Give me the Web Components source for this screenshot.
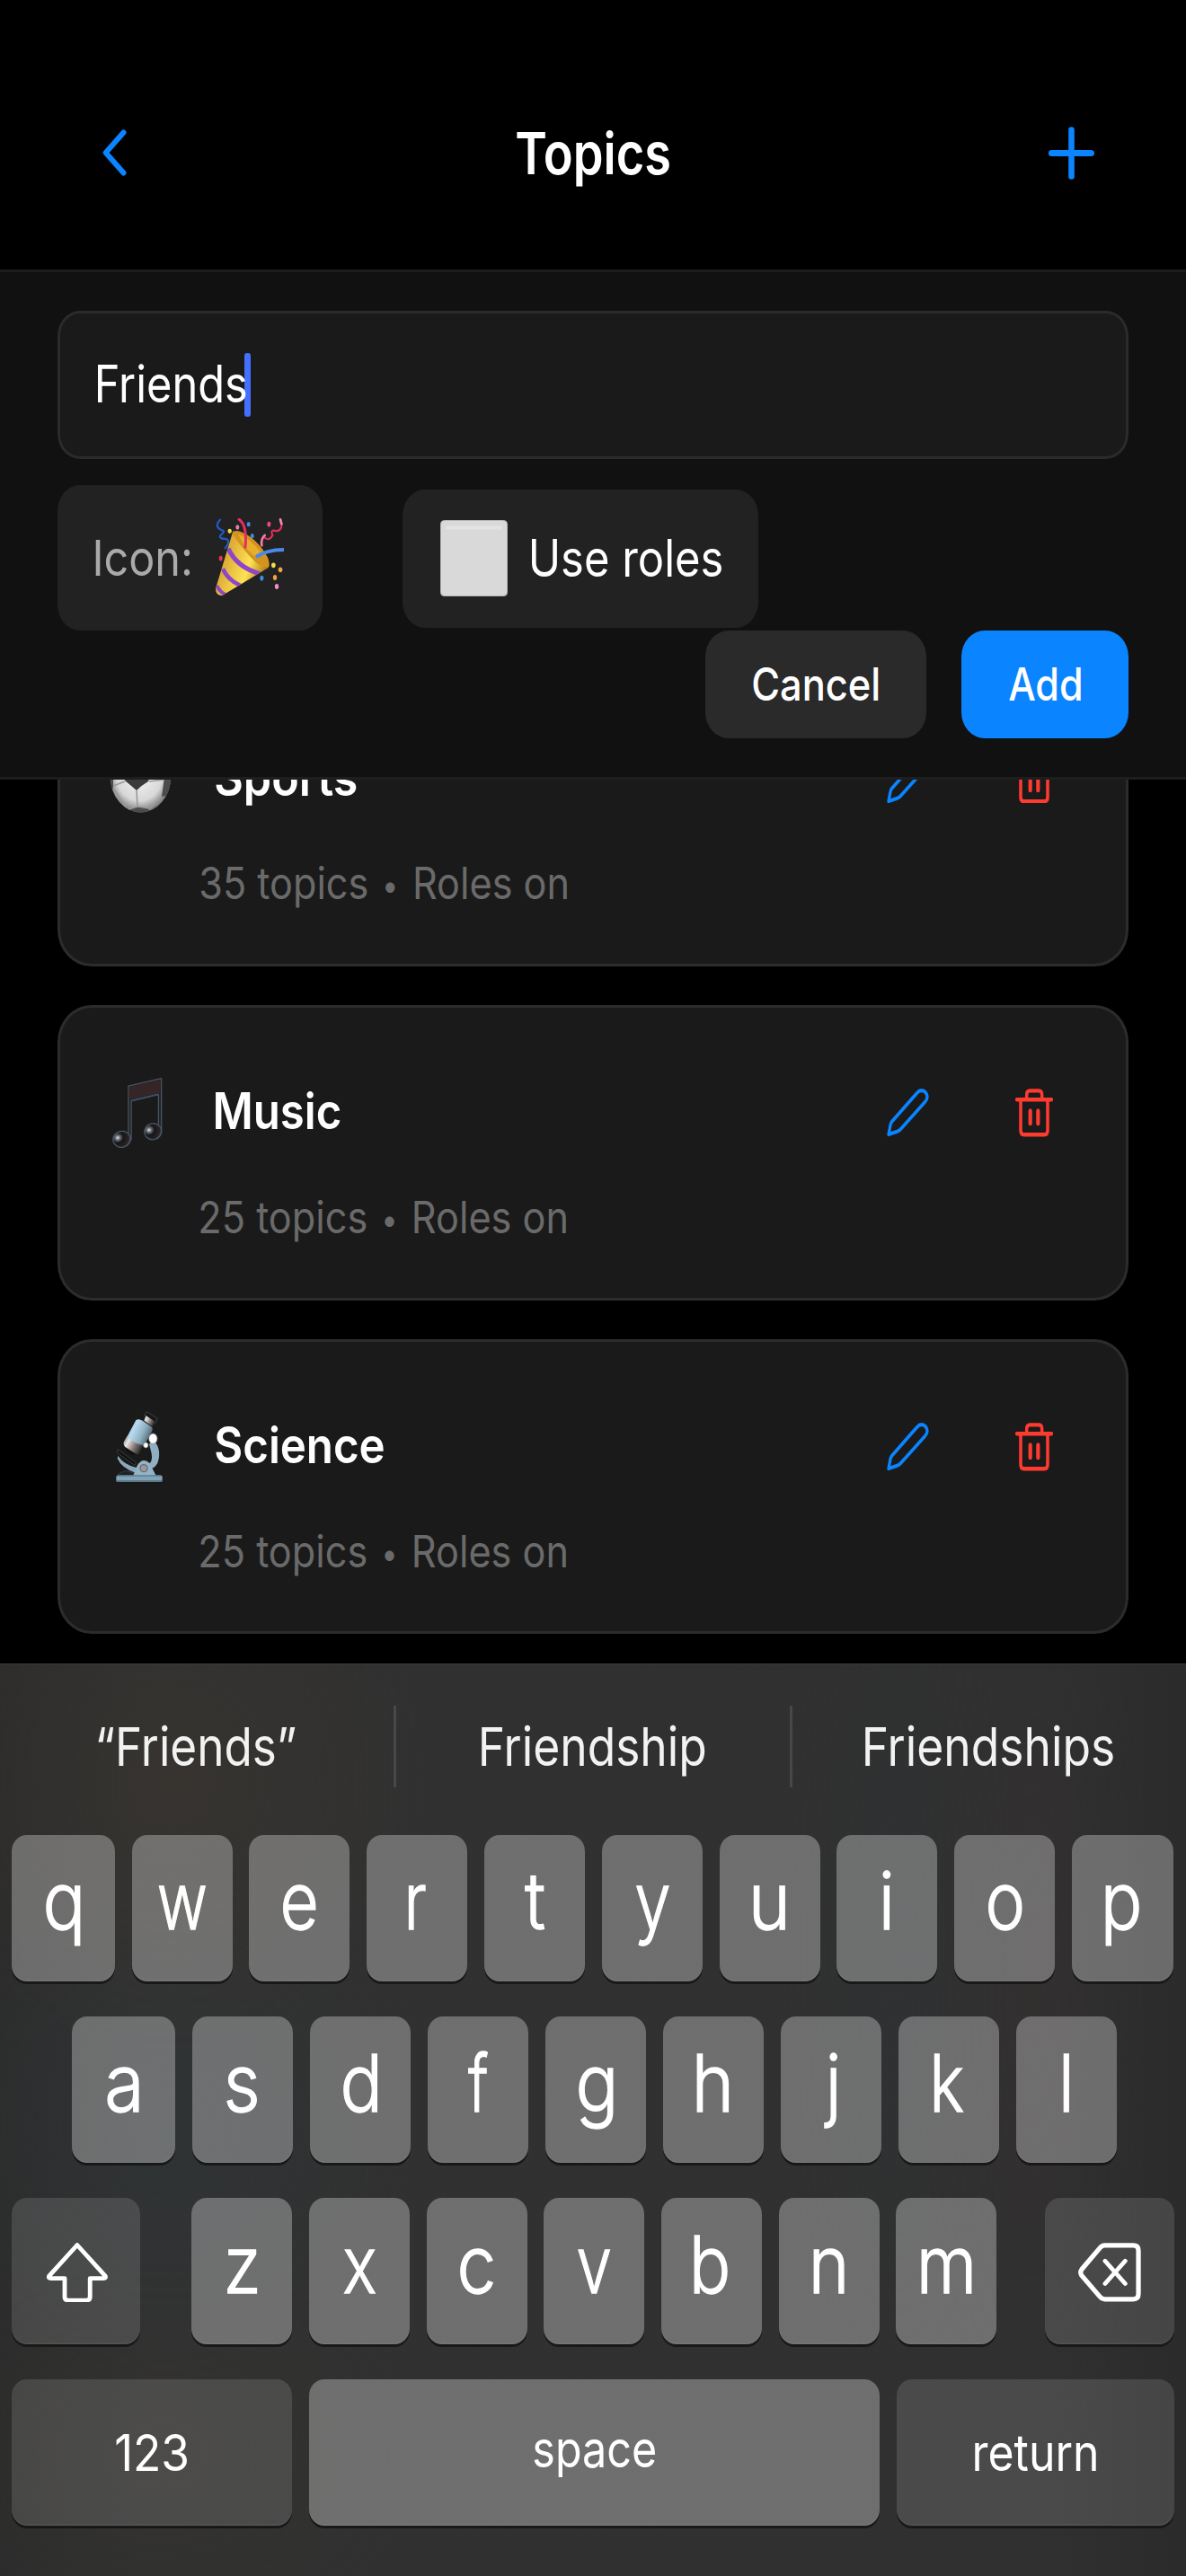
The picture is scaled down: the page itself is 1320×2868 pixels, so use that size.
<!DOCTYPE html>
<html lang="en">
<head>
<meta charset="utf-8">
<title>Topics</title>
<style>
html,body{margin:0;background:#000}
body{width:1320px;height:2868px;overflow:hidden;font-family:Inter,"Liberation Sans",sans-serif;color:#fff}
</style>
</head>
<body>
<topics-app></topics-app>
<script>
const define = (name, html, setup) => customElements.define(name, class extends HTMLElement {
  connectedCallback() {
    if (this.shadowRoot) return;
    const root = this.attachShadow({mode: 'open'});
    const t = document.createElement('template');
    t.innerHTML = typeof html === 'function' ? html(this) : html;
    root.append(t.content.cloneNode(true));
    if (setup) setup(this, root);
  }
});

/* Condensed label: cap = capital height, w = drawn width, wt = weight */
const ctx = document.createElement('canvas').getContext('2d');
define('ui-text', el => `<style>
:host{display:block;flex:none;white-space:nowrap}
span{display:inline-block;line-height:.7273em;transform-origin:0 0;vertical-align:top}
b{display:inline-block;font-weight:inherit;transform:translateY(.04em) scale(.76)}
</style><span></span>`, (el, root) => {
  const span = root.querySelector('span');
  const text = el.getAttribute('text'), cap = +el.getAttribute('cap'), w = +el.getAttribute('w');
  const wt = el.getAttribute('wt') || 400, fs = cap / .7273;
  span.innerHTML = text.replace('•', '<b>•</b>');
  span.style.fontSize = fs + 'px';
  span.style.fontWeight = wt;
  ctx.font = `${wt} ${fs}px Inter, "Liberation Sans", sans-serif`;
  const m = ctx.measureText(text);
  const k = w / (m.actualBoundingBoxLeft + m.actualBoundingBoxRight);
  span.style.transform = `scaleX(${k}) translateX(${m.actualBoundingBoxLeft}px)`;
  el.style.width = w + 'px';
  el.style.height = cap + 'px';
});

const icons = {
back: [27,52,'0 0 27 52',`<path d="M23.5 3.5 3.7 26 23.5 48.5" fill="none" stroke="#0a84ff" stroke-width="6" stroke-linecap="round" stroke-linejoin="round"/>`],
plus: [51,59,'0 0 51 59',`<path d="M25.5 3.5V55.5" stroke="#0a84ff" stroke-width="6.6" stroke-linecap="round"/><path d="M3.5 29.5H47.5" stroke="#0a84ff" stroke-width="7.2" stroke-linecap="round"/>`],
pencil: [46.6,53.5,'262 885 140 131',`<path d="M268 1010 274 984Q275 979 279 975L363 897Q372 888 384 891 397 896 397 909 396 916 390 921L310 994Q304 1000 297 1002Z" fill="none" stroke="#0a84ff" stroke-width="10" stroke-linejoin="round"/>`],
trash: [42,53.5,'690 885 126 131',`<g fill="none" stroke="#ff3b30" stroke-linecap="round"><path stroke-width="10.5" d="M695 915H811M728 914V902Q728 891 739 891H769Q779 891 779 902V914M708 916V999Q708 1010.500 719 1010.500H787Q798 1010.500 798 999V916"/><path stroke-width="12.500" d="M740 946V980M766 946V980"/></g>`],
shift: [67.8,66.5,'124 670 161 161',`<path d="M204.500 676 279 760Q281 766 274 766H238.500V816Q238.500 825 229 825H181Q171.500 825 171.500 816V766H135Q128 766 130 760Z" fill="none" stroke="#fff" stroke-width="11.500" stroke-linejoin="round"/>`],
del: [70,65.7,'1284 672 166 159',`<g fill="none" stroke="#fff" stroke-linecap="round" stroke-linejoin="round"><path stroke-width="12.500" d="M1354 679H1429Q1443 679 1443 693V810Q1443 824 1429 824H1354Q1347 824 1341 817L1293 760Q1288 752 1293 744L1341 686Q1347 679 1354 679Z"/><path stroke-width="11.500" d="M1355 721 1408 782M1408 721 1355 782"/></g>`],
party: [76.7,87.3,'27 27 230 262',`<defs><linearGradient id="g" x1="0" y1="0" x2="1" y2=".45"><stop offset="0" stop-color="#b98a22"/><stop offset=".35" stop-color="#e0b038"/><stop offset=".72" stop-color="#ffe254"/><stop offset="1" stop-color="#b9831c"/></linearGradient><clipPath id="c"><path d="M88 70 30 262Q30 286 52 285L206 192Q212 180 196 160 150 100 88 70Z"/></clipPath></defs>
<path d="M88 70 30 262Q30 286 52 285L206 192Q212 180 196 160 150 100 88 70Z" fill="url(#g)"/>
<g clip-path="url(#c)" fill="none" stroke="#8f46c8"><path d="M72 128Q100 190 176 212" stroke-width="15"/><path d="M54 196Q70 232 112 252" stroke-width="14"/><path d="M34 252Q44 274 66 284" stroke-width="12"/></g>
<path d="M86 78Q90 64 112 71 168 92 204 158 213 182 206 190 182 196 148 158 104 110 86 78Z" fill="#d3931f"/><path d="M106 80Q150 96 186 148 168 160 154 150 122 120 106 80Z" fill="#e9ad2c"/>
<g fill="none" stroke-linecap="round"><path d="M45 32Q24 54 48 66 66 68 46 84 40 96 64 96 82 102 62 127" stroke="#245ac4" stroke-width="6.500"/><path d="M108 31Q136 50 129 124" stroke="#e62e5c" stroke-width="9"/><path d="M246 31Q258 64 234 70 210 62 220 84 208 106 192 90" stroke="#d9305c" stroke-width="6.500"/><path d="M246 31 250 46" stroke="#f08bb4" stroke-width="8"/><path d="M184 118Q180 96 194 84" stroke="#ee7fa9" stroke-width="8"/><path d="M165 156Q200 132 262 132" stroke="#4a8ae6" stroke-width="12" stroke-linecap="butt"/></g>
<g><ellipse cx="77" cy="70" rx="6.500" ry="8" fill="#f1dc4a"/><ellipse cx="103" cy="57" rx="6" ry="8" fill="#e87fb0"/><ellipse cx="140" cy="47" rx="6" ry="8" fill="#3b8de6"/><ellipse cx="152" cy="86" rx="6" ry="8" fill="#3b8de6"/><ellipse cx="208" cy="47" rx="6" ry="8.500" fill="#e94b7b"/><ellipse cx="47" cy="161" rx="6" ry="8.500" fill="#e0345c"/><ellipse cx="223" cy="184" rx="7" ry="8.500" fill="#f1dc4a"/><ellipse cx="246" cy="199" rx="7" ry="8.500" fill="#f0a340"/><ellipse cx="228" cy="225" rx="6.500" ry="9" fill="#f0a340"/><ellipse cx="184" cy="227" rx="6" ry="8.500" fill="#3b8de6"/><ellipse cx="234" cy="255" rx="6.500" ry="9" fill="#f08fc0"/></g>`],
music: [76,80,'196 853 186 196',`<defs><radialGradient id="h" cx=".3" cy=".35" r=".75"><stop offset="0" stop-color="#e8e8e8"/><stop offset=".18" stop-color="#6c7178"/><stop offset=".42" stop-color="#15161a"/><stop offset=".85" stop-color="#2b2325"/><stop offset="1" stop-color="#53606c"/></radialGradient></defs>
<path d="M252 878 342 857V1004H334V901L260 919V1024H252Z" fill="#22262b" stroke="#49545f" stroke-width="3" stroke-linejoin="round"/><path d="M254 881 340 861V895L254 915Z" fill="#352526"/><path d="M260 918 334 900" stroke="#3a5366" stroke-width="3.500"/>
<ellipse cx="234" cy="1023" rx="24" ry="22" fill="url(#h)" stroke="#4a5966" stroke-width="3" transform="rotate(-14 234 1023)"/><ellipse cx="319" cy="1002" rx="23.500" ry="22" fill="url(#h)" stroke="#4a5966" stroke-width="3" transform="rotate(-14 319 1002)"/>`],
science: [76,80,'30 32 228 240',`<defs><linearGradient id="b" x1="0" y1="0" x2="1" y2=".5"><stop offset="0" stop-color="#7899ab"/><stop offset=".35" stop-color="#b8dcef"/><stop offset=".7" stop-color="#8fb0c2"/><stop offset="1" stop-color="#4c6370"/></linearGradient><linearGradient id="m" x1="0" y1="0" x2="1" y2=".5"><stop offset="0" stop-color="#6d7378"/><stop offset=".3" stop-color="#e6e8ea"/><stop offset=".65" stop-color="#8b7d78"/><stop offset="1" stop-color="#2b2b2d"/></linearGradient></defs>
<path d="M182 128Q212 160 196 206 186 224 168 226L160 214Q182 204 176 174L168 142Z" fill="#8fb0c2"/>
<path d="M64 182Q84 212 128 222L122 238Q76 222 62 190Z" fill="#8aa9bb"/><path d="M63 160 124 204 120 213 62 172Z" fill="#111" stroke="#4c5054" stroke-width="2"/><path d="M64 242 88 232 118 238 114 248H66Z" fill="#202123" stroke="#45484b" stroke-width="2"/>
<path d="M160 34 196 57 188 72 152 46Z" fill="#17181a" stroke="#54585c" stroke-width="2"/><path d="M157 47 188 68 178 86 150 66Z" fill="url(#m)"/><path d="M146 60 180 85 174 96 136 68Z" fill="#141517"/>
<path d="M124 62Q134 56 146 64L178 86Q182 94 174 106L150 150Q118 148 94 118Z" fill="url(#b)"/><path d="M94 116Q118 142 148 146L136 172Q132 180 122 174L88 152Q80 144 84 134Z" fill="url(#m)"/><path d="M88 154 122 176 112 179 92 166Z" fill="#111"/>
<path d="M114 250 128 214Q146 184 170 206L192 250Z" fill="#93b4c6"/><circle cx="150" cy="223" r="14" fill="#626e76"/><circle cx="150" cy="223" r="10" fill="#9d9895"/>
<rect x="58" y="247" width="154" height="22" rx="5" fill="#80a3b6"/><path d="M62 248H208" stroke="#5c7e94" stroke-width="4"/><path d="M60 266H210" stroke="#4f6a78" stroke-width="4"/>
<ellipse cx="181" cy="124" rx="14" ry="17" fill="#fff" stroke="#7b7f83" stroke-width="2"/><ellipse cx="157" cy="146" rx="8" ry="9" fill="#fff" stroke="#777" stroke-width="2"/>`],
sports: [76,80,'0 0 76 80',`<defs><radialGradient id="s" cx=".48" cy=".45" r=".55"><stop offset="0" stop-color="#f6f6f6"/><stop offset=".7" stop-color="#d8d8d8"/><stop offset="1" stop-color="#777"/></radialGradient><clipPath id="k"><ellipse cx="36.500" cy="38.500" rx="33.500" ry="39"/></clipPath></defs>
<ellipse cx="36.500" cy="38.500" rx="33.500" ry="39" fill="url(#s)"/><g clip-path="url(#k)"><path d="M18 30 34 22 48 34 45 43Q38 47 32 53 25 47 19 42Z" fill="#3a3a3a"/><path d="M0 38 6 41 6 50 3 56ZM76 34 63 38 60 60 70 58ZM20 76Q32 69 45 73L50 80H22ZM24 0H50L40 8Z" fill="#4c4c4c"/><path d="M32 53 33 71M19 43 6 48M46 43 62 41M33 71 20 75M33 71 46 73M60 60 46 74M6 50 22 75" fill="none" stroke="#9a9a9a" stroke-width="1.600"/></g>`],
box: [75,85,'0 0 75 85',`<rect x=".5" y=".5" width="74" height="84" rx="4" fill="#d9d9d9" stroke="#b5b5b5"/><path d="M6 8.500H69" stroke="#e3e3e3" stroke-width="4"/>`]
};
define('ui-icon', el => {
  const [w,h,vb,body] = icons[el.getAttribute('name')];
  return `<style>:host{display:block;flex:none;width:${w}px;height:${h}px}svg{display:block}</style>
  <svg width="${w}" height="${h}" viewBox="${vb}" preserveAspectRatio="none">${body}</svg>`;
});

define('nav-header', `<style>
:host{display:grid;grid-template-columns:1fr auto 1fr;align-items:center;box-sizing:border-box;height:303px;padding:40px 102px 0;border-bottom:3px solid #1c1c1c;background:#000}
.l{margin-left:12px}.r{justify-self:end}
</style><ui-icon class="l" name="back"></ui-icon><ui-text text="Topics" cap="47" w="170" wt="600"></ui-text><ui-icon class="r" name="plus"></ui-icon>`);

define('app-button', `<style>
:host{display:flex;flex:none;align-items:center;box-sizing:border-box;border-radius:25px/29px;background:#222}
:host([kind=action]){height:120px;justify-content:center;background:#2a2a2a;border-radius:26px/29px}
:host([primary]){background:#0a84ff!important}
</style><slot></slot>`);

define('topic-form', `<style>
:host{display:flex;flex-direction:column;box-sizing:border-box;height:565px;padding:43px 64px 0;background:#111;border-bottom:3px solid #1e1e1e}
.input{display:flex;align-items:center;box-sizing:border-box;height:165px;border:3px solid #2b2b2b;border-radius:25px/28px;background:#1a1a1a;padding:0 0 1px 42px}
.caret{width:6.500px;height:71px;border-radius:3px;background:#456fff;margin-left:-2px}
.row{display:flex;align-items:center;margin-top:28.500px;gap:89.400px}
.icon{width:294.600px;height:162.500px;padding-left:42px;gap:27.500px;color:#aaa}
.roles{width:395.700px;height:154px;margin-top:2px;padding-left:42.500px;gap:27px}
.actions{display:flex;justify-content:flex-end;gap:39px}
.cancel{width:246.500px}.add{width:186px}
</style>
<div class="input"><ui-text text="Friends" cap="41.500" w="165"></ui-text><div class="caret"></div></div>
<div class="row"><app-button class="icon"><ui-text text="Icon:" cap="40.400" w="105.500"></ui-text><ui-icon name="party"></ui-icon></app-button>
<app-button class="roles"><ui-icon name="box"></ui-icon><ui-text text="Use roles" cap="41.500" w="211.500"></ui-text></app-button></div>
<div class="actions"><app-button kind="action" class="cancel"><ui-text text="Cancel" cap="36.500" w="140" wt="500"></ui-text></app-button>
<app-button kind="action" primary class="add"><ui-text text="Add" cap="36.500" w="80" wt="500"></ui-text></app-button></div>`);

define('topic-card', el => `<style>
:host{display:block;flex:none;box-sizing:border-box;height:328.500px;border:3px solid #2c2c2c;border-radius:38px/41px;background:#1a1a1a;padding:77px 81px 0 53px}
.top{display:flex;align-items:center;height:80px}
.name{margin:-3px auto 0 43.500px}.trash{margin-left:96px}
.sub{margin:59px 0 0 102.500px;color:#6a6a6a}
</style><div class="top"><ui-icon name="${el.getAttribute('icon')}"></ui-icon>
<ui-text class="name" text="${el.getAttribute('name')}" cap="40.500" w="${el.getAttribute('nw')}" wt="600"></ui-text>
<ui-icon name="pencil"></ui-icon><ui-icon class="trash" name="trash"></ui-icon></div>
<ui-text class="sub" text="${el.getAttribute('count')} topics • Roles on" cap="35.500" w="${el.getAttribute('sw')}"></ui-text>`);

define('topic-list', `<style>
:host{display:flex;flex-direction:column;gap:43.300px;box-sizing:border-box;height:983.700px;overflow:hidden;padding:0 64px}
topic-card:first-of-type{margin-top:-120.700px}
</style><topic-card name="Sports" icon="sports" nw="157" count="35" sw="408.500"></topic-card>
<topic-card name="Music" icon="music" nw="139" count="25" sw="407.500"></topic-card>
<topic-card name="Science" icon="science" nw="187" count="25" sw="407.500"></topic-card>`);

define('key-cap', `<style>
:host{display:flex;flex:none;flex-direction:column;align-items:center;box-sizing:border-box;width:112px;height:163.300px;padding-top:41.800px;border-radius:17px/18px;background:rgba(255,255,255,.302);box-shadow:0 3px 0 #191919,inset 0 -1.500px 0 rgba(255,255,255,.06)}
:host([dark]){background:rgba(255,255,255,.125)}
</style><slot></slot>`);

const inkW = {q:38,w:51.7,e:36.5,r:18.4,t:22,y:36.3,u:34.6,i:8,o:37.6,p:37,a:34,s:32.7,d:37.7,f:21.5,g:38,h:35,j:14.6,k:31.8,l:6,z:32.7,x:34.4,c:36.5,v:35.5,b:36.9,n:33.5,m:55.4};
const caps = s => [...s].map(c => `<key-cap><ui-text class="letter" text="${c}" cap="64" w="${inkW[c]}" wt="300"></ui-text></key-cap>`).join('');
define('soft-keyboard', `<style>
:host{display:flex;flex-direction:column;box-sizing:border-box;height:1016.300px;border-top:1px solid #3a3a3a;
background:radial-gradient(ellipse 280px 300px at 190px 130px,rgba(62,55,46,.42),transparent),radial-gradient(ellipse 260px 280px at 190px 520px,rgba(46,56,60,.35),transparent),radial-gradient(ellipse 280px 220px at 180px 880px,rgba(56,53,46,.3),transparent),radial-gradient(ellipse 130px 500px at 1000px 330px,rgba(46,50,54,.35),transparent),radial-gradient(ellipse 130px 600px at 1150px 350px,rgba(56,48,47,.3),transparent),linear-gradient(90deg,#2c2c2c,#313131 12%,#303030 88%,#2b2b2b)}
.sug{display:flex;align-items:center;height:190px;padding-bottom:7px;box-sizing:border-box;color:#f2f2f2}
.sug div{flex:1;display:flex;justify-content:center}
.sug i{width:3px;height:91px;background:#484848}
.letter{-webkit-text-stroke:1.300px #fff}
.keys{display:flex;flex-direction:column;gap:38.800px}
.row{display:flex;justify-content:space-between}
.r1{padding:0 13.500px 0 12.500px}.r1>:first-child{width:115.200px}.r1>:last-child{width:113.300px}
.r2{padding:0 77.400px 0 80px}.r2>:first-child{width:114.500px}
.r3,.r4{padding:0 13px 0 12.500px}.mid{display:flex;justify-content:space-between;width:896.300px}
.r3>key-cap{width:143.700px;padding-top:50px}.shift{margin-left:3px}
.mid{margin-left:3px}
.r4 key-cap{padding-top:60.700px}.r4 .sp{padding-top:56.700px}
</style>
<div class="sug"><div><ui-text text="“Friends”" cap="43.300" w="219.500"></ui-text></div><i></i><div><ui-text text="Friendship" cap="43.300" w="248.700"></ui-text></div><i></i><div><ui-text text="Friendships" cap="43.300" w="276.200"></ui-text></div></div>
<div class="keys"><div class="row r1">${caps('qwertyuiop')}</div><div class="row r2">${caps('asdfghjkl')}</div>
<div class="row r3"><key-cap dark><ui-icon class="shift" name="shift"></ui-icon></key-cap><div class="mid">${caps('zxcvbnm')}</div><key-cap dark><ui-icon name="del"></ui-icon></key-cap></div>
<div class="row r4"><key-cap dark style="width:312.500px"><ui-text text="123" cap="41" w="79.500"></ui-text></key-cap><key-cap class="sp" style="width:635px"><ui-text text="space" cap="41.200" w="135.600"></ui-text></key-cap><key-cap dark style="width:309px"><ui-text text="return" cap="41" w="134.700"></ui-text></key-cap></div></div>`);

define('topics-app', `<style>:host{display:flex;flex-direction:column;width:1320px;height:2868px;overflow:hidden;background:#000}</style>
<nav-header></nav-header><topic-form></topic-form><topic-list></topic-list><soft-keyboard></soft-keyboard>`);
</script>
</body>
</html>
